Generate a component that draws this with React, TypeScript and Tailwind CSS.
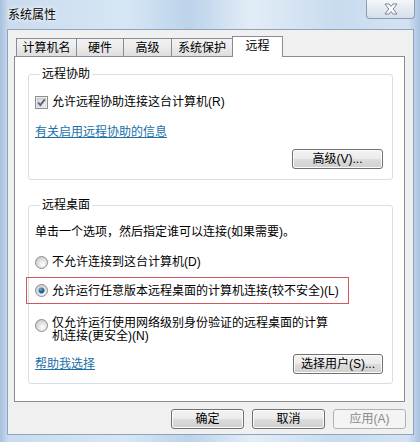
import React from 'react';

const tabs = [
  { name: '计算机名', w: 'w-[61px]' },
  { name: '硬件', w: 'w-[48px]' },
  { name: '高级', w: 'w-[49px]' },
  { name: '系统保护', w: 'w-[62px]' },
  { name: '远程', w: 'w-[51px]', active: true },
];

function CheckBox() {
  return (
    <svg width="13" height="13" viewBox="0 0 13 13" className="shrink-0">
      <defs>
        <linearGradient id="cbg" x1="0" y1="0" x2="1" y2="1">
          <stop offset="0" stopColor="#cfcfcf" />
          <stop offset="1" stopColor="#f7f7f7" />
        </linearGradient>
      </defs>
      <rect x="0.5" y="0.5" width="12" height="12" fill="#fff" stroke="#8e8f8f" />
      <rect x="2" y="2" width="9" height="9" fill="url(#cbg)" stroke="#b8b8b8" strokeWidth="0.6" />
      <path d="M3.2 6.6 L5.4 9 L9.8 3.4" fill="none" stroke="#4c6387" strokeWidth="1.8" />
    </svg>
  );
}

function Radio({ checked }: { checked?: boolean }) {
  return (
    <svg width="13" height="13" viewBox="0 0 13 13" className="shrink-0">
      <defs>
        <radialGradient id="rbg" cx="0.6" cy="0.65" r="0.6">
          <stop offset="0" stopColor="#ffffff" />
          <stop offset="1" stopColor="#cfcfcf" />
        </radialGradient>
        <radialGradient id="rdot" cx="0.4" cy="0.35" r="0.7">
          <stop offset="0" stopColor="#6fb4e0" />
          <stop offset="0.55" stopColor="#1f5a80" />
          <stop offset="1" stopColor="#123a56" />
        </radialGradient>
      </defs>
      <circle cx="6.5" cy="6.5" r="6" fill="url(#rbg)" stroke="#8d8d8d" />
      {checked && <circle cx="6.5" cy="6.5" r="3" fill="url(#rdot)" stroke="#9cc6e3" strokeWidth="0.6" />}
    </svg>
  );
}

function Button({ label, w = 'w-[91px]', disabled }: { label: string; w?: string; disabled?: boolean }) {
  return (
    <div
      className={`${w} h-[20px] rounded-[3px] border flex items-center justify-center text-[12px] leading-none ${
        disabled
          ? 'border-[#adb2b5] bg-[#f4f4f4] text-[#8a8a8a]'
          : 'border-[#707070] bg-[linear-gradient(180deg,#f3f3f3_0%,#ebebeb_50%,#dddddd_51%,#cfcfcf_100%)] text-black shadow-[inset_0_0_0_1px_#fcfcfc]'
      }`}
    >
      {label}
    </div>
  );
}

export default function App() {
  return (
    <div className='w-[420px] h-[442px] overflow-hidden flex flex-col pl-[7px] pr-[6px] bg-[linear-gradient(90deg,#a7c0dd_0%,#c9dbee_2%,#d7e6f4_30%,#bcd3ea_45%,#e3edf7_60%,#c7dbef_80%,#d4e3f2_97%,#a9c2de_100%)] font-["Liberation_Sans","Noto_Sans_CJK_SC",sans-serif] text-black'>
      {/* title bar */}
      <div className="h-[29px] flex items-start justify-between shrink-0">
        <div className="pl-[1px] pt-[7px] text-[12px] leading-[16px] text-black [text-shadow:0_0_6px_#ffffff,0_0_3px_#ffffff]">
          系统属性
        </div>
        <div className="mr-[-1px] w-[49px] h-[19px] rounded-b-[4px] border border-t-0 border-[#8a9db4] bg-[linear-gradient(180deg,#f4f7fb_0%,#e3eaf2_50%,#d6dfea_100%)] flex items-center justify-center">
          <svg width="16" height="12" viewBox="0 0 16 12">
            <path
              d="M2 1 H6 L8 3.5 L10 1 H14 L10.2 6 L14 11 H10 L8 8.5 L6 11 H2 L5.8 6 Z"
              fill="#ffffff"
              stroke="#7a8492"
              strokeWidth="1"
              strokeLinejoin="round"
            />
          </svg>
        </div>
      </div>

      {/* client area */}
      <div className="w-[407px] h-[406px] border border-[#8fa3ba] bg-[#f0f0f0] flex flex-col pt-[6px]">
        {/* tabs */}
        <div className="flex items-end h-[20px] ml-[8px]">
          {tabs.map((t, i) => (
            <div
              key={t.name}
              className={`${t.w} ${i > 0 ? '-ml-px' : ''} flex items-center justify-center text-[12px] leading-none border border-b-0 border-[#898c95] ${
                t.active
                  ? 'h-[21px] -mb-px bg-white relative z-10 pb-[3px]'
                  : 'h-[18px] bg-[linear-gradient(180deg,#f3f3f3_0%,#ebebeb_50%,#dedede_100%)]'
              }`}
            >
              {t.name}
            </div>
          ))}
        </div>

        {/* tab panel */}
        <div className="ml-[6px] w-[391px] h-[346px] border border-[#898c95] bg-white flex flex-col">
          {/* remote assistance */}
          <fieldset className="mt-[10px] ml-[13px] w-[365px] border border-[#d5dfe5] rounded-[3px] pl-[6px] pr-[9px] pb-[10px]">
            <legend className="ml-[5px] px-[2px] text-[12px] leading-[14px]">远程协助</legend>
            <div className="mt-[13px] h-[16px] flex items-center gap-[4px] text-[12px]">
              <CheckBox />
              <span>允许远程协助连接这台计算机(R)</span>
            </div>
            <div className="mt-[14px] h-[16px] flex items-center text-[12px] text-[#1a6fa8] underline">
              有关启用远程协助的信息
            </div>
            <div className="mt-[9px] flex justify-end">
              <Button label="高级(V)..." />
            </div>
          </fieldset>

          {/* remote desktop */}
          <fieldset className="mt-[18px] ml-[13px] w-[365px] border border-[#d5dfe5] rounded-[3px] pl-[6px] pr-[9px] pb-[9px]">
            <legend className="ml-[5px] px-[2px] text-[12px] leading-[14px]">远程桌面</legend>
            <div className="mt-[12px] h-[16px] flex items-center text-[12px]">
              单击一个选项，然后指定谁可以连接(如果需要)。
            </div>
            <div className="mt-[14px] h-[16px] flex items-center gap-[4px] text-[12px]">
              <Radio />
              <span>不允许连接到这台计算机(D)</span>
            </div>
            <div className="mt-[7px] -ml-[9px] w-[323px] h-[27px] border border-[#d0585a] pl-[8px] flex items-center gap-[4px] text-[12px]">
              <Radio checked />
              <span>允许运行任意版本远程桌面的计算机连接(较不安全)(L)</span>
            </div>
            <div className="mt-[13px] flex items-start gap-[4px] text-[12px] leading-[13px]">
              <div className="mt-[2px]">
                <Radio />
              </div>
              <span className="w-[280px]">仅允许运行使用网络级别身份验证的远程桌面的计算机连接(更安全)(N)</span>
            </div>
            <div className="mt-[11px] flex items-center justify-between">
              <span className="text-[12px] text-[#1a6fa8] underline">帮助我选择</span>
              <Button label="选择用户(S)..." w="w-[90px]" />
            </div>
          </fieldset>
        </div>

        {/* dialog buttons */}
        <div className="mt-[7px] mr-[7px] flex justify-end gap-[8px]">
          <Button label="确定" w="w-[73px]" />
          <Button label="取消" w="w-[73px]" />
          <Button label="应用(A)" w="w-[73px]" disabled />
        </div>
      </div>
    </div>
  );
}
